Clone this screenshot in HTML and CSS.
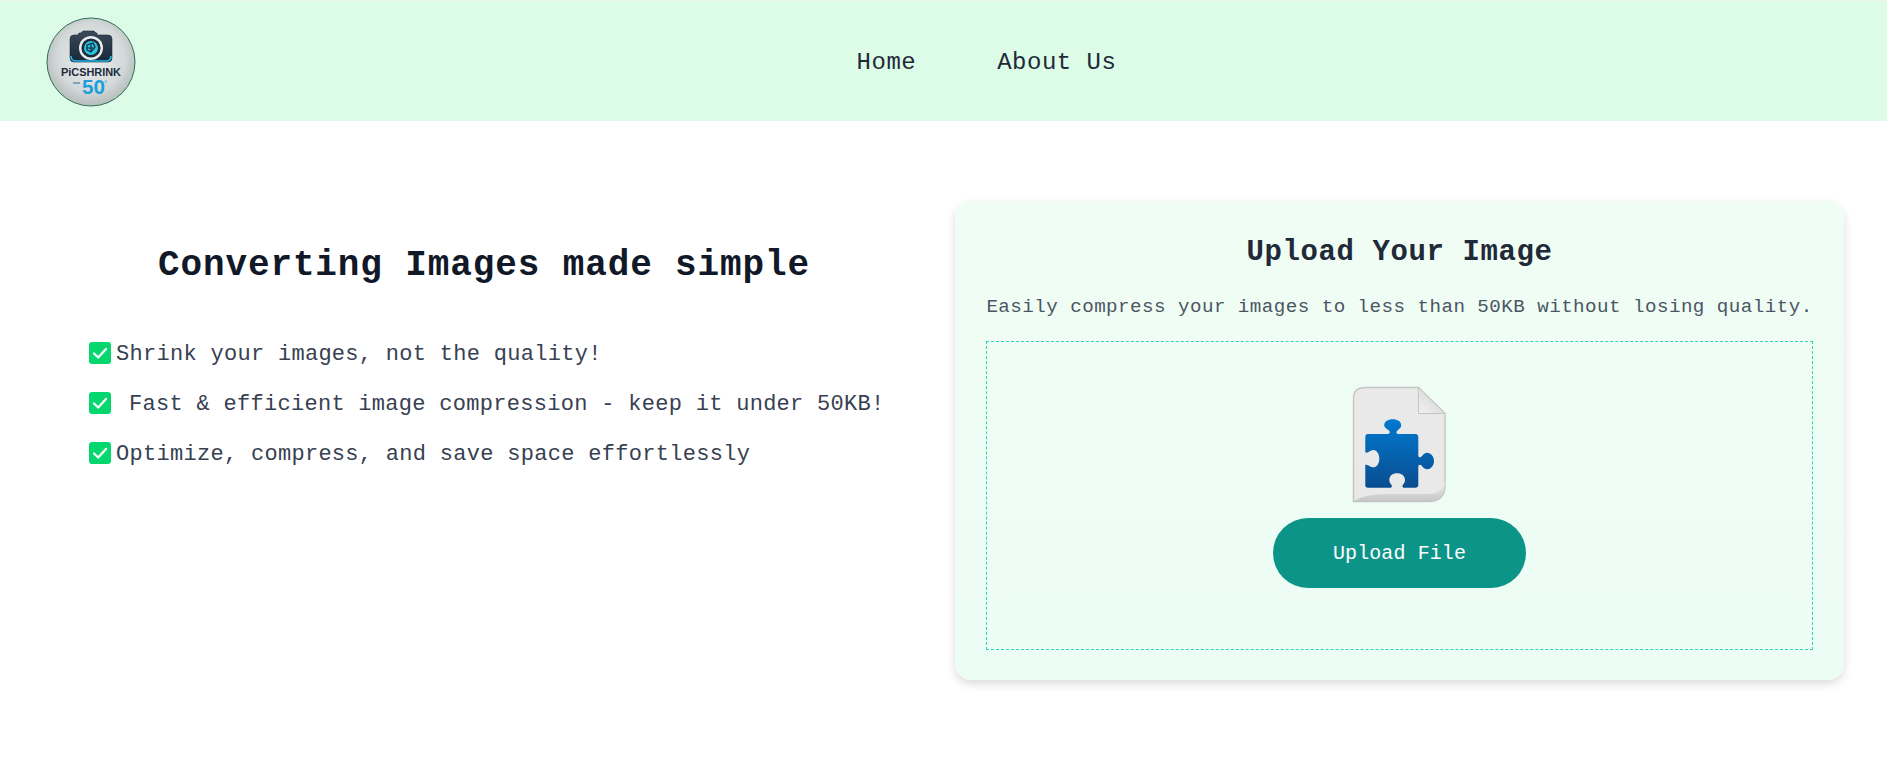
FILE: index.html
```html
<!DOCTYPE html>
<html lang="en">
<head>
<meta charset="utf-8">
<title>PicShrink 50</title>
<link rel="stylesheet" href="styles.css">
</head>
<body>
<svg class="defs" width="0" height="0" aria-hidden="true">
  <symbol id="check" viewBox="0 0 22 22">
    <rect width="22" height="22" rx="3" fill="#06d66e"/>
    <path d="M5 11.5l4.2 4L17 7" fill="none" stroke="#f2fff8" stroke-width="2.4" stroke-linecap="round" stroke-linejoin="round"/>
  </symbol>
</svg>
<header class="topbar">
  <svg class="logo" viewBox="0 0 90 90" role="img" aria-label="PicShrink 50 logo">
    <defs>
      <radialGradient id="disc" cx="50%" cy="45%" r="55%">
        <stop offset="0" stop-color="#eef0f0"/>
        <stop offset="0.7" stop-color="#d3d8d8"/>
        <stop offset="1" stop-color="#b4bcbc"/>
      </radialGradient>
      <linearGradient id="body" x1="0" y1="0" x2="0" y2="1">
        <stop offset="0" stop-color="#3c4a58"/>
        <stop offset="1" stop-color="#16283a"/>
      </linearGradient>
    </defs>
    <circle cx="45" cy="45" r="44" fill="url(#disc)" stroke="#2f6f57" stroke-width="1"/>
    <path d="M28 18h4l1-2h2l2-2h11l2 2h1v2h11q4 0 4 4v19q0 4-4 4H28q-4 0-4-4V22q0-4 4-4z" fill="url(#body)" stroke="#1a2a3a" stroke-width=".6"/>
    <path d="M25 39q0 5 5 5h30q5 0 5-5" fill="none" stroke="#22b8e6" stroke-width="1.6"/>
    <circle cx="45" cy="31" r="12" fill="#e8eef0"/>
    <circle cx="45" cy="31" r="9.6" fill="#1c2c3c"/>
    <circle cx="45" cy="31" r="7" fill="#2cc3dc"/>
    <path d="M41 28l6-2 2 4-4 5-4-2zM45 27v8M41 31h8" fill="none" stroke="#14283a" stroke-width="1.2"/>
    <text class="logo-name" x="45" y="58.5" text-anchor="middle" textLength="60" lengthAdjust="spacingAndGlyphs">PiCSHRINK</text>
    <text class="logo-num" x="36" y="77" textLength="23" lengthAdjust="spacingAndGlyphs">50</text>
    <text class="logo-deg" x="58" y="69">°</text>
    <path d="M27 66h7" stroke="#4a7f9f" stroke-width="1.2"/>
  </svg>
  <nav class="nav">
    <a class="nav-link" href="#">Home</a>
    <a class="nav-link" href="#">About Us</a>
  </nav>
</header>
<main class="main">
  <section class="intro">
    <h1 class="headline">Converting Images made simple</h1>
    <ul class="points">
      <li class="point"><svg class="tick"><use href="#check"/></svg><span>Shrink your images, not the quality!</span></li>
      <li class="point"><svg class="tick"><use href="#check"/></svg><span class="indented">Fast &amp; efficient image compression - keep it under 50KB!</span></li>
      <li class="point"><svg class="tick"><use href="#check"/></svg><span>Optimize, compress, and save space effortlessly</span></li>
    </ul>
  </section>
  <section class="card">
    <h2 class="card-title">Upload Your Image</h2>
    <p class="card-text">Easily compress your images to less than 50KB without losing quality.</p>
    <div class="dropzone">
      <svg class="file-icon" viewBox="0 0 96 120" role="img" aria-label="File icon">
        <defs>
          <linearGradient id="piece" x1="0" y1="0" x2="0" y2="1">
            <stop offset="0" stop-color="#0079d0"/>
            <stop offset="1" stop-color="#0a4d90"/>
          </linearGradient>
          <linearGradient id="fold" x1="0" y1="1" x2="1" y2="0">
            <stop offset="0" stop-color="#f1f1f1"/>
            <stop offset="1" stop-color="#cfcfcf"/>
          </linearGradient>
          <linearGradient id="lip" x1="0" y1="0" x2="0" y2="1">
            <stop offset="0" stop-color="#efefef"/>
            <stop offset="1" stop-color="#c6c6c6"/>
          </linearGradient>
        </defs>
        <path d="M13 2.5H66.5L93 28.5V100Q93 116.5 77 116.5H1.5V14Q1.5 2.5 13 2.5Z" fill="#e9e9ea" stroke="#c4c4c4" stroke-width="1.4"/>
        <path d="M2 116C12 110 22 109 40 109H76Q90 109 92.5 96V100Q92.5 116 77 116Z" fill="url(#lip)"/>
        <path d="M66.5 2.5V28.5H93Z" fill="url(#fold)" stroke="#c4c4c4" stroke-width="1"/>
        <path d="M16 49H35C38 49 38.5 47 37 45.5C33 43 32 41 32.2 40C32.5 36.5 36 34.3 40.7 34.3C45.5 34.3 49 36.5 49.2 40C49.4 42 48 43.5 45.5 45.5C44 47 44 49 47 49H63Q66.3 49 66.3 52V70C66.3 72.5 68 73 69.5 71.5C71.5 69 73 67.7 75 67.7C79 67.7 82 71.5 82 76C82 80.5 79 84.3 75 84.3C73 84.3 71.5 83 69.5 80.5C68 79 66.3 79.5 66.3 82V100Q66.3 102.7 63 102.7H52C50.5 102.7 50 101.5 50.8 100C52 98.5 53 97 53 95C53 91 49.5 88.3 45 88.3C40.5 88.3 37.3 91 37.3 95C37.3 97 38.3 98.5 39.5 100C40.3 101.5 39.8 102.7 38 102.7H16Q13.3 102.7 13.3 100V80C13.3 79.5 15 79.5 16.5 80.5C18.5 81.8 20 82.3 21.5 82.3C25 82.3 27.3 78 27.3 73.7C27.3 69.5 25 65 21.5 65C20 65 18.5 65.7 16.5 67C15 68 13.3 68 13.3 67V52Q13.3 49 16 49Z" fill="url(#piece)"/>
      </svg>
      <button class="upload-btn" type="button">Upload File</button>
    </div>
  </section>
</main>
</body>
</html>
```
FILE: styles.css
```css
* {
  box-sizing: border-box;
}

html,
body {
  margin: 0;
  padding: 0;
  background: #ffffff;
}

body {
  font-family: "Liberation Mono", "DejaVu Sans Mono", monospace;
  min-height: 771px;
  overflow: hidden;
}

.defs {
  display: block;
  height: 0;
}

.topbar {
  position: relative;
  display: flex;
  align-items: center;
  justify-content: center;
  height: 121px;
  background: #dcfce7;
  border-top: 1px solid #eef3ef;
}

.logo {
  position: absolute;
  left: 46px;
  top: 16px;
  width: 90px;
  height: 90px;
}

.logo-name {
  font-family: "Liberation Sans", sans-serif;
  font-size: 11.5px;
  font-weight: 700;
  fill: #1d2b3c;
}

.logo-num {
  font-family: "Liberation Sans", sans-serif;
  font-size: 20px;
  font-weight: 700;
  fill: #1a9fdb;
}

.logo-deg {
  font-family: "Liberation Sans", sans-serif;
  font-size: 8px;
  fill: #1a9fdb;
}

.nav {
  display: flex;
  gap: 81px;
  margin-left: 86px;
  padding-top: 2px;
}

.nav-link {
  color: #1f2937;
  font-size: 24px;
  letter-spacing: 0.5px;
  text-decoration: none;
}

.main {
  display: grid;
  grid-template-columns: 792px 889px;
  column-gap: 75px;
  padding: 80px 0 0 88px;
}

.intro {
  padding-top: 42px;
}

.headline {
  margin: 0 0 53px;
  color: #111827;
  font-size: 36px;
  line-height: 46px;
  font-weight: 700;
  letter-spacing: 0.88px;
  text-align: center;
}

.points {
  margin: 0;
  padding: 0;
  list-style: none;
  display: flex;
  flex-direction: column;
  gap: 25px;
}

.point {
  display: flex;
  align-items: center;
  gap: 5px;
  height: 25px;
  color: #374151;
  font-size: 22px;
  letter-spacing: 0.29px;
  white-space: nowrap;
}

.tick {
  flex: none;
  width: 22px;
  height: 22px;
  margin-top: -3px;
  margin-left: 1px;
}

.indented {
  margin-left: 13px;
}

.card {
  height: 479px;
  padding: 33px 31px;
  background: linear-gradient(180deg, #f0fdf4, #ecfdf5);
  border-radius: 16px;
  box-shadow: 0 4px 10px rgba(0, 0, 0, 0.14);
  text-align: center;
}

.card-title {
  margin: 0 0 22px;
  color: #1f2937;
  font-size: 29px;
  line-height: 38px;
  font-weight: 700;
  letter-spacing: 0.6px;
}

.card-text {
  margin: 0 0 20px;
  color: #4b5563;
  font-size: 19.2px;
  line-height: 27px;
  letter-spacing: 0.46px;
  white-space: nowrap;
}

.dropzone {
  display: flex;
  flex-direction: column;
  align-items: center;
  width: 827px;
  height: 309px;
  padding-top: 43px;
  border: 1px dashed #2dd4bf;
}

.file-icon {
  display: block;
  width: 96px;
  height: 120px;
  margin-bottom: 13px;
}

.upload-btn {
  width: 253px;
  height: 70px;
  padding: 1px 0 0;
  border: 0;
  border-radius: 35px;
  background: #0d9488;
  color: #ffffff;
  font-family: inherit;
  font-size: 20px;
  letter-spacing: 0.1px;
}
```
